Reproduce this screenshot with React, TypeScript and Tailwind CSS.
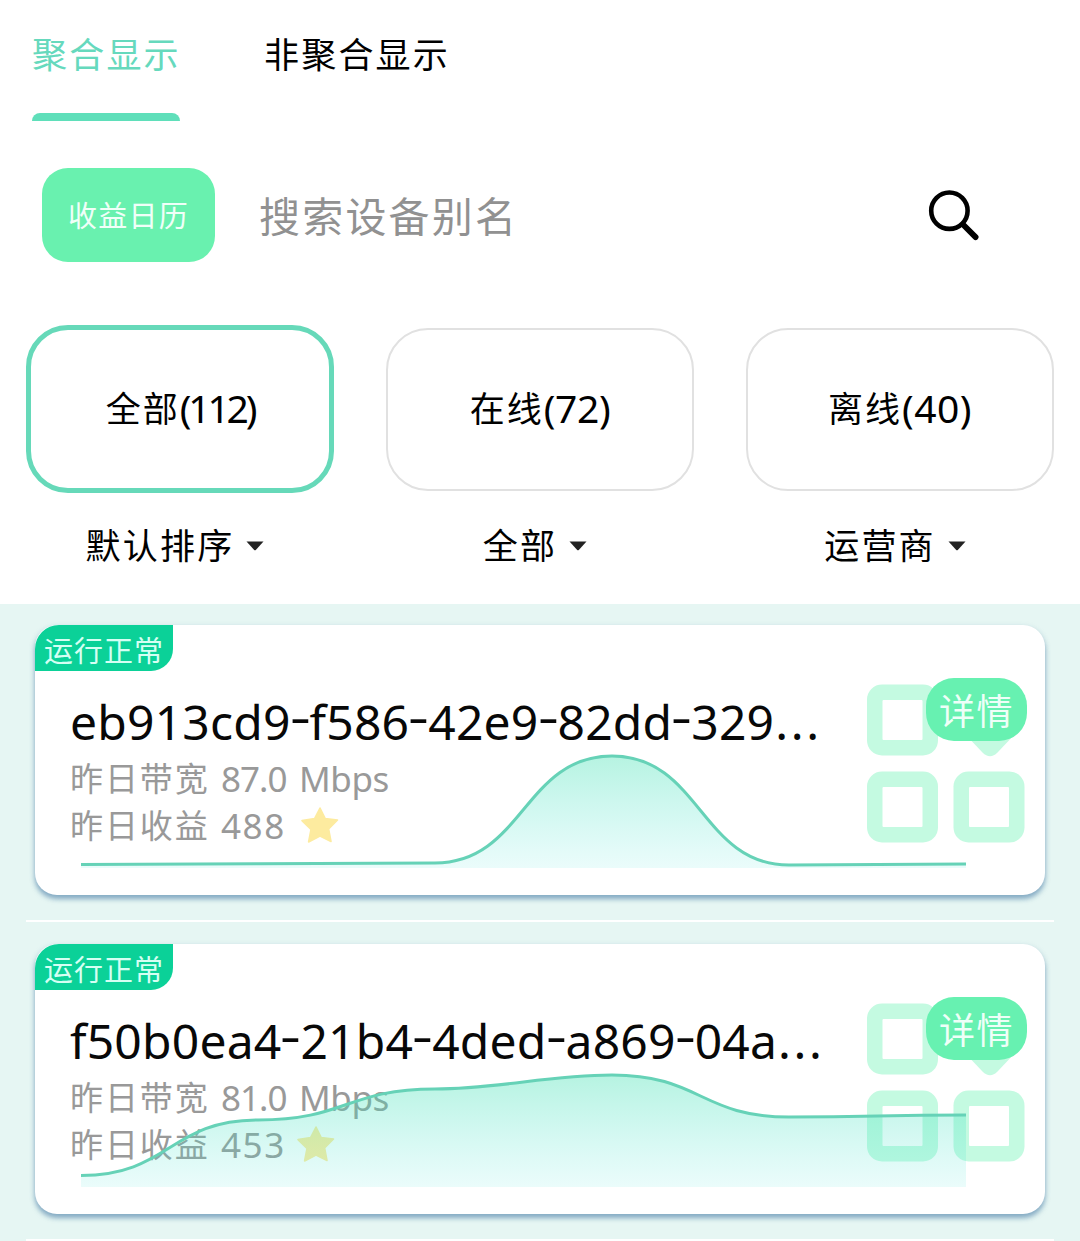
import React from "react";

const CJK = "font-['Noto_Sans_CJK_SC',sans-serif]";
const LATIN = "font-['Noto_Sans','Noto_Sans_CJK_SC',sans-serif]";

type Device = {
  id: string;
  bandwidth: string;
  income: string;
  incomeWidth: string;
  line: string;
};

const devices: Device[] = [
  {
    id: "eb913cd9-f586-42e9-82dd-329",
    bandwidth: "87.0",
    income: "488",
    incomeWidth: "w-[79px]",
    line: "M46 239.5 C134 239.5 312 238 400 238 C488 238 489 131 577 131 C665 131 666 240 754 240 C842 240 843 239 931 239",
  },
  {
    id: "f50b0ea4-21b4-4ded-a869-04a",
    bandwidth: "81.0",
    income: "453",
    incomeWidth: "w-[75px]",
    line: "M46 231.5 C134 231.5 135 176 223 176 C311 176 312 145 400 145 C465 145 512 131 577 131 C665 131 666 173 754 173 C842 173 843 171 931 171",
  },
];

const filters = [
  { name: "全部", count: "(112)", tracking: "tracking-[-3.2px]", active: true },
  { name: "在线", count: "(72)", tracking: "tracking-[-0.4px]", active: false },
  { name: "离线", count: "(40)", tracking: "tracking-[0.5px]", active: false },
];

const sorts = ["默认排序", "全部", "运营商"];

function SearchIcon() {
  return (
    <svg className="h-[54px] w-[54px]" viewBox="0 0 54 54" fill="none" stroke="#000">
      <circle cx="22.4" cy="22.7" r="18.2" strokeWidth="4.6" />
      <path d="M36 36.5 L48.6 49.1" strokeWidth="5.8" strokeLinecap="round" />
    </svg>
  );
}

function Caret() {
  return (
    <svg className="h-[10px] w-[18px]" viewBox="0 0 18 10">
      <path d="M0.5 0.5 H17.5 L9.8 8.9 Q9 9.6 8.2 8.9 Z" fill="#222" />
    </svg>
  );
}

function Star() {
  return (
    <svg className="h-[38px] w-[40px]" viewBox="0 0 40 38">
      <path
        d="M20 2 L25.2 12.6 L37.5 14 L28.6 23 L31 35.5 L20 30 L8.6 36 L11 23.4 L2 14.6 L14.6 12.6 Z"
        fill="#fdeb9f"
        stroke="#fdeb9f"
        strokeWidth="1.6"
        strokeLinejoin="round"
      />
    </svg>
  );
}

function TilesIcon() {
  return (
    <svg className="h-[160px] w-[160px]" viewBox="0 0 160 160">
      <g fill="#c4fae1">
        <rect x="0" y="0.5" width="71" height="71" rx="15" />
        <rect x="0" y="87.5" width="71" height="71" rx="15" />
        <rect x="86.5" y="87.5" width="71" height="71" rx="15" />
        <path d="M98 50 H148 L130.5 68.5 Q123 76 115.5 68.5 Z" />
      </g>
      <g fill="#fff">
        <rect x="15.5" y="16" width="40" height="40" rx="1" />
        <rect x="15.5" y="103" width="40" height="40" rx="1" />
        <rect x="102" y="103" width="40" height="40" rx="1" />
      </g>
    </svg>
  );
}

function DeviceId({ id }: { id: string }) {
  return (
    <>
      {id.split("-").map((part, i) => (
        <React.Fragment key={part}>
          {i > 0 && <span className="relative top-[-6px] inline-block w-[19px] scale-x-[1.35] text-center">-</span>}
          {part}
        </React.Fragment>
      ))}
      <span className="pl-[1px] tracking-[2.6px]">...</span>
    </>
  );
}

function DeviceCard({ device, index }: { device: Device; index: number }) {
  const fillId = `area-${index}`;
  return (
    <article className="relative mx-[35px] flex h-[270px] shrink-0 flex-col rounded-[22px] bg-white shadow-[0_4px_5px_0px_rgba(84,134,172,0.62),0_2px_6px_0px_rgba(110,150,180,0.2)]">
      <div
        className={`flex h-[46px] w-[138px] items-center rounded-tl-[24px] rounded-br-[22px] bg-[#0bd198] pt-[3px] pl-[9px] text-[29px] leading-none tracking-[1px] text-[#d5fff3] ${CJK}`}
      >
        <span className="whitespace-nowrap">运行正常</span>
      </div>
      <div className="flex justify-between pl-[35px] pr-[18px]">
        <div className="flex flex-col">
          <h2
            className={`mt-[22px] h-[58px] whitespace-nowrap text-[48px] leading-[58px] tracking-[0.2px] text-[#080808] ${LATIN}`}
          >
            <DeviceId id={device.id} />
          </h2>
          <p className="mt-[3px] flex h-[47px] items-center text-[#999]">
            <span className={`w-[151px] whitespace-nowrap text-[33px] tracking-[1.9px] ${CJK}`}>昨日带宽</span>
            <span className={`w-[78px] pt-[3px] text-[35px] tracking-[-1px] ${LATIN}`}>{device.bandwidth}</span>
            <span className={`pt-[3px] text-[35px] tracking-[-0.4px] ${LATIN}`}>Mbps</span>
          </p>
          <p className="flex h-[47px] items-center text-[#999]">
            <span className={`w-[151px] whitespace-nowrap text-[33px] tracking-[1.9px] ${CJK}`}>昨日收益</span>
            <span className={`pt-[3px] text-[35px] tracking-[1.6px] ${device.incomeWidth} ${LATIN}`}>
              {device.income}
            </span>
            <Star />
          </p>
        </div>
        <div className="mt-[13px] h-[160px] w-[160px]">
          <TilesIcon />
        </div>
      </div>
      <svg className="pointer-events-none absolute inset-0 h-[270px] w-[1010px]" viewBox="0 0 1010 270" fill="none">
        <defs>
          <linearGradient id={fillId} x1="0" y1="131" x2="0" y2="243" gradientUnits="userSpaceOnUse">
            <stop offset="0" stopColor="#3fe0b0" stopOpacity="0.38" />
            <stop offset="1" stopColor="#55e6dc" stopOpacity="0.12" />
          </linearGradient>
        </defs>
        <path d={`${device.line} V243 H46 Z`} fill={`url(#${fillId})`} />
        <path d={device.line} stroke="#66d2b7" strokeWidth="3" />
      </svg>
      <button
        className={`absolute right-[18px] top-[53px] flex h-[63px] w-[101px] items-center justify-center rounded-[28px] bg-[#67f1b1] pb-[2px] text-[36px] leading-none tracking-[1.5px] text-[#eefff8] ${CJK}`}
      >
        详情
      </button>
    </article>
  );
}

export default function App() {
  return (
    <div className="flex h-[1241px] w-[1080px] flex-col overflow-hidden bg-white text-black">
      <nav className={`flex h-[121px] shrink-0 gap-[84px] pl-[32px] text-[35px] tracking-[2.2px] ${CJK}`}>
        <div className="flex w-[148px] flex-col justify-between">
          <span className="mt-[27px] whitespace-nowrap leading-[52px] text-[#66d9bd]">聚合显示</span>
          <span className="h-[8px] rounded-t-[8px] bg-[#5fdfba]" />
        </div>
        <span className="mt-[27px] whitespace-nowrap leading-[52px]">非聚合显示</span>
      </nav>

      <section className={`mt-[47px] flex h-[94px] shrink-0 items-center pl-[42px] pr-[99px] ${CJK}`}>
        <button className="h-full w-[173px] rounded-[26px] bg-[#69f1af] text-[29px] tracking-[1.2px] text-[#f0fff8]">
          收益日历
        </button>
        <span className="ml-[44px] flex-1 text-[41px] tracking-[2.2px] text-[#919191]">搜索设备别名</span>
        <SearchIcon />
      </section>

      <section className="mt-[63px] grid h-[168px] shrink-0 grid-cols-3 items-center justify-items-center">
        {filters.map((f) => (
          <div
            key={f.name}
            className={
              f.active
                ? "flex h-[168px] w-[308px] items-center justify-center rounded-[42px] border-[5px] border-[#66d9b9] pb-[3px]"
                : "flex h-[163px] w-[308px] items-center justify-center rounded-[42px] border-[2.5px] border-[#e1e1e1] pb-[3px]"
            }
          >
            <span className={`text-[35px] tracking-[2px] ${CJK}`}>{f.name}</span>
            <span className={`text-[39px] leading-[52px] ${f.tracking} ${LATIN}`}>{f.count}</span>
          </div>
        ))}
      </section>

      <section className={`grid h-[111px] shrink-0 grid-cols-3 text-[35px] tracking-[2.2px] ${CJK}`}>
        {sorts.map((name) => (
          <div key={name} className="flex h-[106px] items-center justify-center gap-[12px] pr-[10px]">
            <span className="pb-[3px]">{name}</span>
            <Caret />
          </div>
        ))}
      </section>

      <main className="flex flex-1 flex-col bg-[#e6f6f3] pt-[21px]">
        {devices.map((d, i) => (
          <React.Fragment key={d.id}>
            <DeviceCard device={d} index={i} />
            <div className="mx-[26px] mt-[25px] mb-[22px] h-[2px] shrink-0 bg-white" />
          </React.Fragment>
        ))}
      </main>
    </div>
  );
}
